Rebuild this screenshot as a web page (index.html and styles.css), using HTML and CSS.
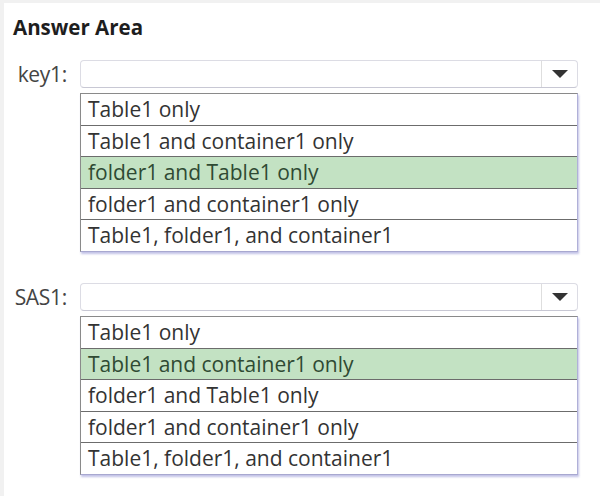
FILE: index.html
```html
<!DOCTYPE html>
<html>
<head>
<meta charset="utf-8">
<link rel="stylesheet" href="styles.css">
</head>
<body>
<div class="panel">
  <div class="title">Answer Area</div>

  <div class="group">
    <div class="label">key1:</div>
    <div class="select"><span class="value"></span><span class="arrow"></span></div>
    <ul class="list">
      <li>Table1 only</li>
      <li>Table1 and container1 only</li>
      <li class="picked">folder1 and Table1 only</li>
      <li>folder1 and container1 only</li>
      <li>Table1, folder1, and container1</li>
    </ul>
  </div>

  <div class="group second">
    <div class="label">SAS1:</div>
    <div class="select"><span class="value"></span><span class="arrow"></span></div>
    <ul class="list">
      <li>Table1 only</li>
      <li class="picked">Table1 and container1 only</li>
      <li>folder1 and Table1 only</li>
      <li>folder1 and container1 only</li>
      <li>Table1, folder1, and container1</li>
    </ul>
  </div>
</div>
</body>
</html>
```

FILE: styles.css
```css
html, body {
  margin: 0;
  padding: 0;
  background: #f1f1f1;
  height: 100%;
}
body {
  font-family: "Open Sans", "Noto Sans", sans-serif;
  color: #333;
}
.panel {
  margin: 3px 0 0 4px;
  background: #fff;
  height: calc(100% - 3px);
  padding-top: 12px;
  box-sizing: border-box;
}
.title {
  font-weight: 700;
  font-size: 20.5px;
  line-height: 24px;
  color: #1e1e1e;
  padding-left: 9px;
}
.group {
  display: grid;
  grid-template-columns: 76px 498px;
  margin-top: 21px;
}
.group.second {
  margin-top: 31px;
}
.label {
  font-size: 21px;
  line-height: 28px;
  text-align: right;
  padding-right: 13px;
  color: #444;
  letter-spacing: -0.3px;
}
.select {
  height: 28px;
  box-sizing: border-box;
  border: 1px solid #dcdce4;
  border-bottom-color: #c8c8d4;
  border-radius: 4px;
  display: flex;
  background: #fff;
}
.value {
  flex: 1;
  border-right: 1px solid #dedede;
}
.arrow {
  width: 35px;
  display: flex;
  align-items: center;
  justify-content: center;
}
.arrow::before {
  content: "";
  border-left: 8px solid transparent;
  border-right: 8px solid transparent;
  border-top: 8px solid #333;
}
.list {
  grid-column: 2;
  list-style: none;
  margin: 5px 0 0 0;
  padding: 0;
  border: 1px solid #8a8a8a;
  border-right-color: #b0b0d8;
  border-bottom-color: #a8a8d0;
  box-shadow: 1px 2px 2px rgba(120, 120, 200, 0.45);
}
.list li {
  height: 30.6px;
  line-height: 30.6px;
  font-size: 21px;
  padding-left: 7px;
  color: #333;
  border-top: 1px solid #6c6c6c;
  white-space: nowrap;
}
.list li:first-child {
  border-top: none;
}
.list li.picked {
  background: #c3e2c3;
  color: #2f4a33;
}
```
